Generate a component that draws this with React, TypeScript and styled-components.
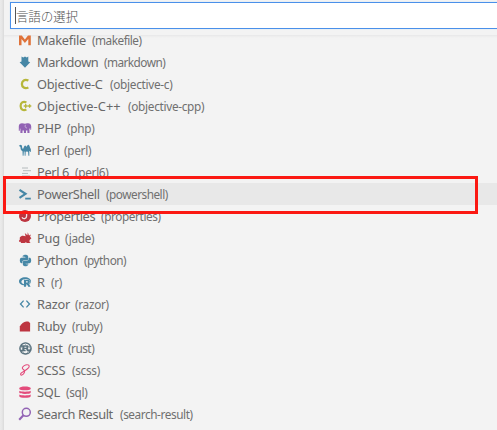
import React from "react";
import styled, { createGlobalStyle } from "styled-components";
import { FaPython, FaRust, FaRProject } from "react-icons/fa";

const GlobalStyle = createGlobalStyle`
  * { box-sizing: border-box; }
  body { margin: 0; background: #f3f3f3; overflow: hidden; }
`;

const Picker = styled.main`
  position: relative;
  width: 497px;
  height: 430px;
  padding: 2px 0 0 4px;
  overflow: hidden;
  display: flex;
  flex-direction: column;
  background: linear-gradient(90deg, #ebebeb 0, #e6e6e6 2px, #dadada 4px, #f3f3f3 4px);
  color: #686868;
  font-family: "Noto Sans", "Open Sans", "Noto Sans CJK JP", sans-serif;
`;

const SearchBox = styled.div`
  flex: none;
  height: 27px;
  margin-left: 6px;
  padding: 4px 0 0 4px;
  display: flex;
  background: #fff;
  border: 1px solid #4a90ea;
  border-right: 0;
  box-shadow: 0 0 1px #b5d8f8;
`;

const Caret = styled.span`
  width: 1px;
  height: 17px;
  background: #555;
`;

const Placeholder = styled.span`
  font: 300 12.6px/18px "Noto Sans CJK JP", sans-serif;
  letter-spacing: -0.25px;
  color: #505050;
`;

const Gap = styled.div`
  flex: none;
  height: 4px;
`;

const List = styled.div`
  position: relative;
  flex: 1;
  min-height: 0;
  overflow: hidden;
  &::before {
    content: "";
    position: absolute;
    inset: 2px 0 auto;
    height: 3px;
    background: linear-gradient(#e7e7e8, #eeeeee 50%, transparent);
  }
`;

const Rows = styled.div`
  position: relative;
  margin-top: -4px;
`;

const Row = styled.div<{ $active?: boolean }>`
  height: 22px;
  padding-left: 13px;
  display: flex;
  align-items: center;
  background: ${(p) => (p.$active ? "#e8e8e8" : "transparent")};
  white-space: nowrap;
`;

const IconSlot = styled.span<{ $color: string }>`
  flex: none;
  width: 16px;
  height: 16px;
  margin-right: 4px;
  display: flex;
  align-items: center;
  justify-content: center;
  color: ${(p) => p.$color};
  svg { display: block; }
`;

const Label = styled.span<{ $width: number; $spacing: number }>`
  flex: none;
  width: ${(p) => p.$width}px;
  font-size: 12.8px;
  line-height: 16px;
  letter-spacing: ${(p) => p.$spacing}px;
`;

const Detail = styled.span<{ $spacing: number }>`
  font-size: 11.8px;
  line-height: 16px;
  letter-spacing: ${(p) => p.$spacing}px;
  color: #707070;
`;

const Highlight = styled.div`
  position: absolute;
  left: 3px;
  top: 176px;
  width: 475px;
  height: 38px;
  border: 3px solid #fb1812;
`;

const Svg = ({ children }: { children: React.ReactNode }) => (
  <svg width="16" height="16" viewBox="0 0 16 16" fill="none" stroke="none">{children}</svg>
);

const blue = "#4687a6";
const olive = "#b7b73b";
const red = "#bd3540";
const purple = "#9263b4";
const pink = "#e34b7b";
const slate = "#5c7480";
const orange = "#df7239";

const icons = {
  make: <Svg><path d="M2 13.300V3.500h2.800L7.900 7.500 11 3.500h2.800v9.800h-2.500V7L7.900 11 4.500 7v6.300z" fill="currentColor" /></Svg>,
  markdown: <Svg><path d="M4.500 2.500l1.800 1L8 2.500l1.700 1 1.600-1V7.500l1.900.8L8 13.800 2.600 8.300l1.900-.8z" fill="currentColor" /></Svg>,
  c: <Svg><path d="M11.400 4.500C7.600 2.700 4.900 4.900 4.900 8s2.700 5.300 6.500 3.500" stroke="currentColor" strokeWidth="2.300" /></Svg>,
  cpp: <Svg><path d="M9.400 4.400C6 2.800 3.600 4.900 3.600 8s2.400 5.200 5.800 3.600" stroke="currentColor" strokeWidth="2.200" /><path d="M6.700 8h4M8.700 6v4M10.900 8h3.400M12.600 6.300v3.400" stroke="currentColor" strokeWidth="1.300" /></Svg>,
  php: <Svg><path d="M1.800 10.800V6.200c0-2 1.400-3 3.200-3 1.200 0 2 .2 3 .6 1-.6 2-.8 3.200-.5 1.600 0 2.900 1 3 3v3.300l-.9.3V8.200l-.9.5.1 4.300h-2.100v-2.500H9V13H6.900v-2.500H5.500V13H3.400V8.800l-.5-.4-.1 2.400z" fill="currentColor" /><path d="M8.600 4.800c-1 1.400-.4 3 1.300 3.300" stroke="#e8dff0" strokeWidth=".6" /></Svg>,
  perl: <Svg><path d="M1.800 3.700l1.900-1 1.200.8.4 3 .8.200c.6-.7.900-3 2-3.300.8 0 1 1 1.400 1.300.7-.6 1.200-2.300 2.100-1.900 1.200.6.900 2.500 1.800 3.500.7.900.6 2.300.4 3.600h-.6l-.2-1-.7.3v4.600h-.9l-.3-3.700-.9-.6-1.500.2-.2 4.100H7.700l-.1-4-.7-.6-.4 4.500h-.8L5.500 9.300C3.900 8.600 3.600 7 3.400 5z" fill="currentColor" /></Svg>,
  text: <Svg><path d="M5 4h6M6 6.700h8M5 9.400h6M5 12h8" stroke="currentColor" strokeWidth="1" /></Svg>,
  powershell: <Svg><path d="M2.500 3.800l6 4-6 4" stroke="currentColor" strokeWidth="2.200" /><path d="M8.200 12.600h5.600" stroke="currentColor" strokeWidth="1.800" /></Svg>,
  properties: <Svg><circle cx="8" cy="8" r="6" fill="currentColor" /><path d="M5 9.300c1 2.300 4.800 1.500 4.600-1.300V5H7.200" stroke="#f3e6e7" strokeWidth="1.300" /></Svg>,
  pug: <Svg><path d="M2.800 7.500C4.200 5.300 6.300 5.500 8.600 6.200L7.800 3l2.600 2.200.4-3 1.200 3.300 1.900-1-.8 2.300 1.300 1.500-1.800 1.800-.1 1.900 1.200 1H9.900l-1-.8-1.300.8H3.700l.4-1.300-1.600.3-.6-1.200.9-1z" fill="currentColor" /></Svg>,
  python: <FaPython size={13} />,
  r: <FaRProject size={12} />,
  razor: <Svg><path d="M6.600 4.600L3.500 8l3.100 3.400M9.400 4.600L12.500 8l-3.100 3.400" stroke="currentColor" strokeWidth="1.300" /></Svg>,
  ruby: <Svg><path d="M2.800 13.600V8.500c1.600-3 4-5 6.500-5.100h2l1.800 1.500v8.700z" fill="currentColor" /></Svg>,
  rust: <FaRust size={13} />,
  scss: <Svg><path d="M11.200 6.200c1.500-1.300 1.300-3.200-.6-3.400-2.300-.3-5 1.400-5.300 3.100-.2 1.300 1.700 1.500 2.200 2.700.6 1.500-1.100 4-2.600 4.500-1.100.4-1.800-.7-.8-1.900 1.400-1.700 5-2.500 7.100-5" stroke="currentColor" strokeWidth="1.100" /></Svg>,
  sql: <Svg><path d="M2.300 4.100c0-2.100 11.400-2.100 11.400 0v.8c0 1.700-11.400 1.700-11.400 0zM2.300 6.800c2 1.200 9.400 1.200 11.400 0v1.900c0 1.600-11.400 1.600-11.400 0zM2.300 10.500c2 1.200 9.400 1.200 11.400 0v1.700c0 2-11.400 2-11.400 0z" fill="currentColor" /></Svg>,
  search: <Svg><circle cx="9.300" cy="6.300" r="4" stroke="currentColor" strokeWidth="1.500" /><path d="M6.700 9.100l-4.500 4.700" stroke="currentColor" strokeWidth="2.100" /></Svg>,
};

interface Language {
  name: string;
  id: string;
  icon: keyof typeof icons;
  color: string;
  width: number;
  active?: boolean;
  ls?: number;
  ds?: number;
}

const languages: Language[] = [
  { name: "Makefile", id: "makefile", icon: "make", color: orange, width: 55, ds: -0.5 },
  { name: "Markdown", id: "markdown", icon: "markdown", color: blue, width: 67, ls: -0.35, ds: -0.55 },
  { name: "Objective-C", id: "objective-c", icon: "c", color: olive, width: 73 },
  { name: "Objective-C++", id: "objective-cpp", icon: "cpp", color: olive, width: 91, ls: 0.05 },
  { name: "PHP", id: "php", icon: "php", color: purple, width: 30 },
  { name: "Perl", id: "perl", icon: "perl", color: blue, width: 27 },
  { name: "Perl 6", id: "perl6", icon: "text", color: "#b4babc", width: 38, ls: -0.35 },
  { name: "PowerShell", id: "powershell", icon: "powershell", color: blue, width: 69, active: true, ls: -0.4, ds: -0.5 },
  { name: "Properties", id: "properties", icon: "properties", color: red, width: 64, ls: -0.4, ds: -0.4 },
  { name: "Pug", id: "jade", icon: "pug", color: red, width: 28 },
  { name: "Python", id: "python", icon: "python", color: blue, width: 47, ds: -0.5 },
  { name: "R", id: "r", icon: "r", color: blue, width: 14 },
  { name: "Razor", id: "razor", icon: "razor", color: blue, width: 38 },
  { name: "Ruby", id: "ruby", icon: "ruby", color: red, width: 35 },
  { name: "Rust", id: "rust", icon: "rust", color: slate, width: 31, ds: -0.5 },
  { name: "SCSS", id: "scss", icon: "scss", color: pink, width: 35 },
  { name: "SQL", id: "sql", icon: "sql", color: pink, width: 29 },
  { name: "Search Result", id: "search-result", icon: "search", color: purple, width: 83, ls: -0.4, ds: -0.42 },
];

export default function App() {
  return (
    <>
      <GlobalStyle />
      <Picker>
        <SearchBox>
          <Caret />
          <Placeholder>言語の選択</Placeholder>
        </SearchBox>
        <Gap />
        <List>
          <Rows>
            {languages.map((l) => (
              <Row key={l.name} $active={l.active}>
                <IconSlot $color={l.color}>{icons[l.icon]}</IconSlot>
                <Label $width={l.width} $spacing={l.ls ?? -0.25}>{l.name}</Label>
                <Detail $spacing={l.ds ?? -0.3}>({l.id})</Detail>
              </Row>
            ))}
          </Rows>
        </List>
        <Highlight />
      </Picker>
    </>
  );
}
